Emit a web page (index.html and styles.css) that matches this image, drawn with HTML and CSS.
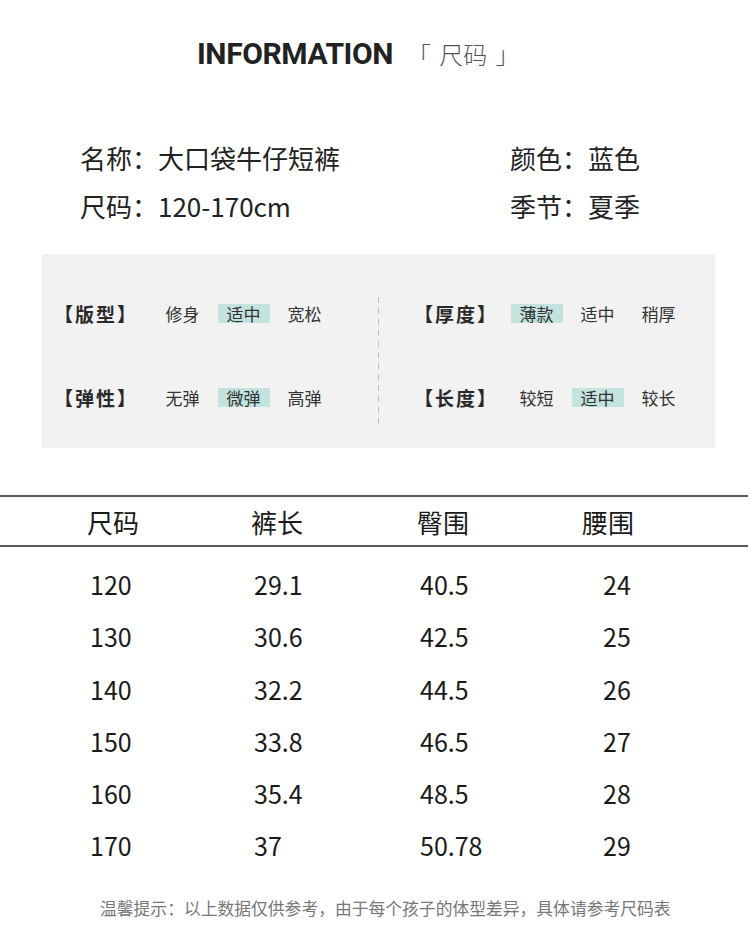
FILE: index.html
```html
<!DOCTYPE html>
<html lang="zh-CN">
<head>
<meta charset="utf-8">
<title>尺码信息</title>
<link rel="stylesheet" href="styles.css">
</head>
<body>
<div class="page">
  <header class="title">
    <span class="title-en">INFORMATION</span>
    <span class="title-cn">「 尺码 」</span>
  </header>

  <section class="info">
    <div class="info-item">名称：大口袋牛仔短裤</div>
    <div class="info-item">颜色：蓝色</div>
    <div class="info-item">尺码：120-170cm</div>
    <div class="info-item">季节：夏季</div>
  </section>

  <section class="attrs">
    <div class="attr-half attr-left">
      <div class="attr-row">
        <span class="attr-label">【版型】</span>
        <span class="opt">修身</span>
        <span class="opt"><span class="hl">适中</span></span>
        <span class="opt">宽松</span>
      </div>
      <div class="attr-row">
        <span class="attr-label">【弹性】</span>
        <span class="opt">无弹</span>
        <span class="opt"><span class="hl">微弹</span></span>
        <span class="opt">高弹</span>
      </div>
    </div>
    <div class="attr-divider"></div>
    <div class="attr-half attr-right">
      <div class="attr-row">
        <span class="attr-label">【厚度】</span>
        <span class="opt"><span class="hl">薄款</span></span>
        <span class="opt">适中</span>
        <span class="opt">稍厚</span>
      </div>
      <div class="attr-row">
        <span class="attr-label">【长度】</span>
        <span class="opt">较短</span>
        <span class="opt"><span class="hl">适中</span></span>
        <span class="opt">较长</span>
      </div>
    </div>
  </section>

  <section class="size-table">
    <div class="tbl-head">
      <span>尺码</span><span>裤长</span><span>臀围</span><span>腰围</span>
    </div>
    <div class="tbl-body">
      <div class="tbl-row"><span>120</span><span>29.1</span><span>40.5</span><span class="c4">24</span></div>
      <div class="tbl-row"><span>130</span><span>30.6</span><span>42.5</span><span class="c4">25</span></div>
      <div class="tbl-row"><span>140</span><span>32.2</span><span>44.5</span><span class="c4">26</span></div>
      <div class="tbl-row"><span>150</span><span>33.8</span><span>46.5</span><span class="c4">27</span></div>
      <div class="tbl-row"><span>160</span><span>35.4</span><span>48.5</span><span class="c4">28</span></div>
      <div class="tbl-row"><span>170</span><span>37</span><span>50.78</span><span class="c4">29</span></div>
    </div>
  </section>

  <p class="note">温馨提示：以上数据仅供参考，由于每个孩子的体型差异，具体请参考尺码表</p>
</div>
</body>
</html>
```

FILE: styles.css
```css
html, body {
  margin: 0;
  padding: 0;
  background: #ffffff;
}

body {
  font-family: "Noto Sans CJK SC", "Noto Sans", sans-serif;
  color: #222222;
}

.page {
  width: 750px;
  height: 947px;
  overflow: hidden;
}

/* Title */
.title {
  display: flex;
  align-items: baseline;
  padding: 39px 0 0 197px;
  height: 30px;
  line-height: 30px;
}

.title-en {
  font-family: Roboto, "Liberation Sans", sans-serif;
  font-weight: 700;
  font-size: 30px;
  letter-spacing: -0.4px;
  color: #222222;
}

.title-cn {
  margin-left: 14px;
  font-size: 24px;
  color: #555555;
  font-weight: 300;
  word-spacing: 3px;
}

/* Info */
.info {
  display: grid;
  grid-template-columns: 430px auto;
  padding: 65px 0 0 80px;
  font-size: 26px;
  line-height: 48px;
  color: #222222;
}

/* Attribute box */
.attrs {
  margin: 24px 0 0 42px;
  width: 673px;
  height: 194px;
  background: #f2f2f2;
  display: grid;
  grid-template-columns: 336px 1px 1fr;
}

.attr-half {
  padding-top: 17px;
}

.attr-left {
  padding-left: 12px;
}

.attr-right {
  padding-left: 35px;
}

.attr-row {
  display: grid;
  align-items: center;
  height: 84px;
  font-size: 17px;
  color: #333333;
}

.attr-left .attr-row {
  grid-template-columns: 98px 61px 61px 61px;
}

.attr-right .attr-row {
  grid-template-columns: 92px 61px 61px 61px;
}

.attr-label {
  font-weight: 700;
  font-size: 19px;
  color: #2a2a2a;
  letter-spacing: 2px;
}

.opt {
  text-align: center;
}

.hl {
  display: inline-block;
  background: #c2e3de;
  padding: 0 9px;
  line-height: 19px;
}

.attr-divider {
  margin-top: 43px;
  height: 128px;
  background: repeating-linear-gradient(to bottom, #bdbdbd 0 6px, transparent 6px 11px);
}

/* Table */
.size-table {
  margin-top: 47px;
}

.tbl-head {
  border-top: 2px solid #5a5a5a;
  border-bottom: 2px solid #5a5a5a;
  height: 48px;
  line-height: 50px;
  font-size: 26px;
  color: #1a1a1a;
  display: grid;
  grid-template-columns: 164px 166px 165px auto;
  padding-left: 87px;
  box-sizing: content-box;
  width: 661px;
}

.tbl-body {
  padding-top: 11px;
}

.tbl-row {
  display: grid;
  grid-template-columns: 164px 166px 165px auto;
  padding-left: 90px;
  height: 52.3px;
  line-height: 52px;
  font-size: 25px;
  color: #1a1a1a;
}

.tbl-row .c4 {
  padding-left: 18px;
}

/* Note */
.note {
  margin: 24px 0 0 100px;
  font-size: 16.8px;
  line-height: 24px;
  color: #777777;
}
```
